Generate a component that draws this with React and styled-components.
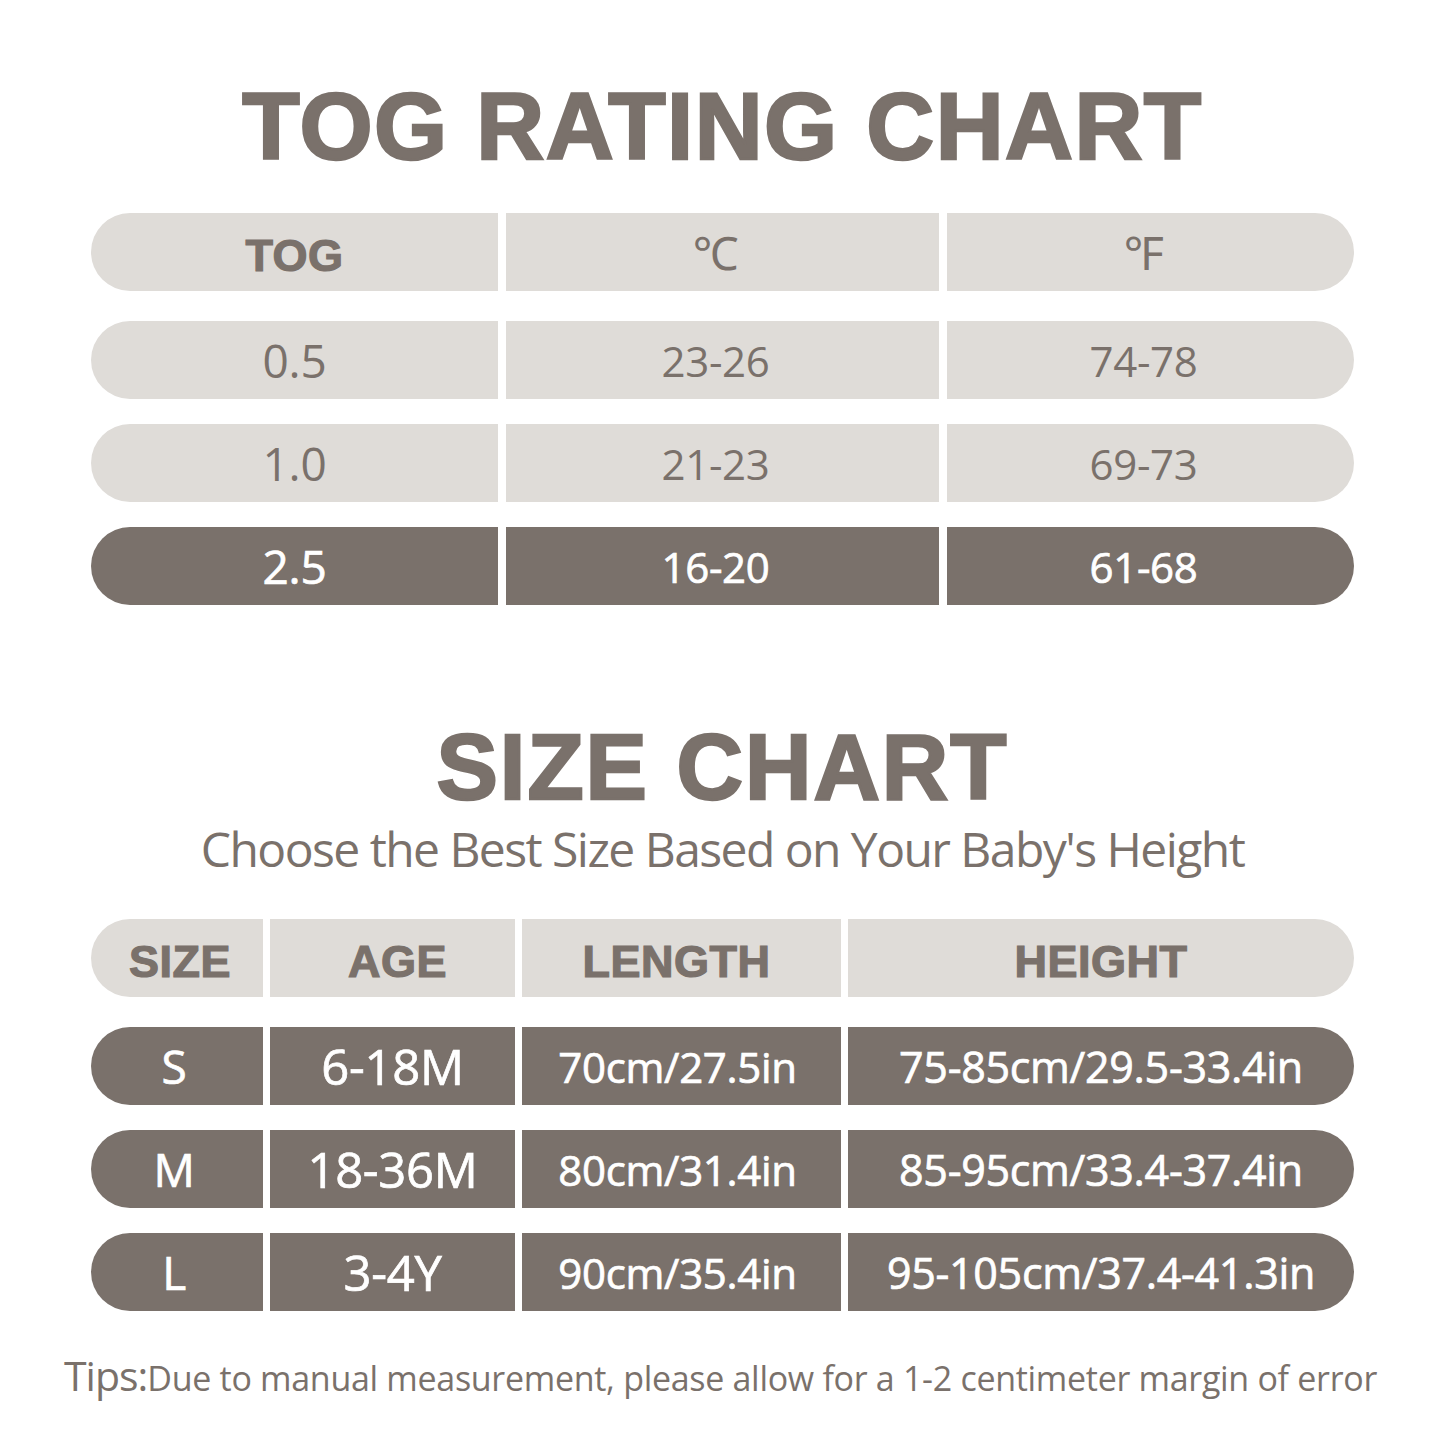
import React from "react";
import styled, { createGlobalStyle } from "styled-components";

const GlobalStyle = createGlobalStyle`
	html, body {
		margin: 0;
		padding: 0;
		background: #ffffff;
	}
	body {
		font-family: "Open Sans", "Noto Sans", sans-serif;
		color: #7a716b;
	}
`;

const TEXT = "#7a716b";
const LIGHT = "#dfdcd8";
const DARK = "#7a716b";

const togRows = [
	{ tog: "0.5", c: "23-26", f: "74-78", dark: false },
	{ tog: "1.0", c: "21-23", f: "69-73", dark: false },
	{ tog: "2.5", c: "16-20", f: "61-68", dark: true },
];

const sizeRows = [
	{ size: "S", age: "6-18M", length: "70cm/27.5in", height: "75-85cm/29.5-33.4in" },
	{ size: "M", age: "18-36M", length: "80cm/31.4in", height: "85-95cm/33.4-37.4in" },
	{ size: "L", age: "3-4Y", length: "90cm/35.4in", height: "95-105cm/37.4-41.3in" },
];

function App() {
	return (
		<Page>
			<GlobalStyle />
			<Title>TOG RATING CHART</Title>

			<Table $gapTop={39}>
				<Row $cols="407px 433px 407px">
					<HeadCell>TOG</HeadCell>
					<UnitCell>℃</UnitCell>
					<UnitCell>℉</UnitCell>
				</Row>
				<Rows>
					{togRows.map((r) => (
						<Row key={r.tog} $cols="407px 433px 407px" $dark={r.dark}>
							<DataCell $size={46}>{r.tog}</DataCell>
							<DataCell $size={42} $shift={14}>{r.c}</DataCell>
							<DataCell $size={42} $shift={14}>{r.f}</DataCell>
						</Row>
					))}
				</Rows>
			</Table>

			<SizeTitle>SIZE CHART</SizeTitle>
			<Subtitle>Choose the Best Size Based on Your Baby's Height</Subtitle>

			<Table $gapTop={42}>
				<Row $cols="172px 245px 319px 506px" $gap={7}>
					<HeadCell $shift={-6}>SIZE</HeadCell>
					<HeadCell $shift={-10}>AGE</HeadCell>
					<HeadCell $shift={10}>LENGTH</HeadCell>
					<HeadCell>HEIGHT</HeadCell>
				</Row>
				<Rows>
					{sizeRows.map((r) => (
						<Row key={r.size} $cols="172px 245px 319px 506px" $gap={7} $dark>
							<DataCell $size={46} $shift={6}>{r.size}</DataCell>
							<DataCell $size={49}>{r.age}</DataCell>
							<DataCell $size={42} $shift={8}>{r.length}</DataCell>
							<DataCell $size={43}>{r.height}</DataCell>
						</Row>
					))}
				</Rows>
			</Table>

			<Tips>
				<TipsLabel>Tips:</TipsLabel>
				Due to manual measurement, please allow for a 1-2 centimeter margin of error
			</Tips>
		</Page>
	);
}

export default App;

const Page = styled.div`
	width: 1445px;
	height: 1445px;
	box-sizing: border-box;
	padding-top: 80px;
	overflow: hidden;
	background: #fff;
`;

const Title = styled.h1`
	margin: 0;
	text-align: center;
	font-family: "Liberation Sans", Arial, sans-serif;
	font-weight: 700;
	font-size: 94px;
	line-height: 94px;
	color: ${TEXT};
	-webkit-text-stroke: 2.5px ${TEXT};
	letter-spacing: 1.5px;
`;

const SizeTitle = styled(Title)`
	margin-top: 116px;
	font-size: 92px;
	line-height: 92px;
	letter-spacing: 2px;
`;

const Subtitle = styled.p`
	margin: 8px 0 0;
	text-align: center;
	font-size: 48px;
	line-height: 56px;
	letter-spacing: -1.55px;
	color: ${TEXT};
`;

const Table = styled.div`
	margin: ${(p) => p.$gapTop}px 91px 0;
	display: flex;
	flex-direction: column;
	gap: 30px;
`;

const Rows = styled.div`
	display: flex;
	flex-direction: column;
	gap: 25px;
`;

const Row = styled.div`
	display: grid;
	grid-template-columns: ${(p) => p.$cols};
	column-gap: ${(p) => p.$gap ?? 8}px;
	height: 78px;

	& > * {
		background: ${(p) => (p.$dark ? DARK : LIGHT)};
		color: ${(p) => (p.$dark ? "#ffffff" : TEXT)};
		-webkit-text-stroke: ${(p) => (p.$dark ? "0.7px #ffffff" : "0")};
	}
	& > *:first-child {
		border-radius: 39px 0 0 39px;
	}
	& > *:last-child {
		border-radius: 0 39px 39px 0;
	}
`;

const Cell = styled.div`
	display: flex;
	align-items: center;
	justify-content: center;
	padding-right: ${(p) => (p.$shift > 0 ? p.$shift : 0)}px;
	padding-left: ${(p) => (p.$shift < 0 ? -p.$shift : 0)}px;
	white-space: nowrap;
`;

const HeadCell = styled(Cell)`
	font-family: "Liberation Sans", Arial, sans-serif;
	font-weight: 700;
	font-size: 45px;
	padding-top: 8px;
	letter-spacing: 0.5px;

	&& {
		-webkit-text-stroke: 1.2px ${TEXT};
	}
`;

const UnitCell = styled(Cell)`
	font-size: 46px;
	padding-right: 14px;
`;

const DataCell = styled(Cell)`
	font-size: ${(p) => p.$size}px;
	letter-spacing: -0.3px;
`;

const Tips = styled.p`
	margin: 40px 0 0 64px;
	font-size: 34px;
	line-height: 48px;
	letter-spacing: -0.3px;
	color: ${TEXT};
	white-space: nowrap;
`;

const TipsLabel = styled.span`
	font-size: 41px;
	letter-spacing: -1px;
`;
